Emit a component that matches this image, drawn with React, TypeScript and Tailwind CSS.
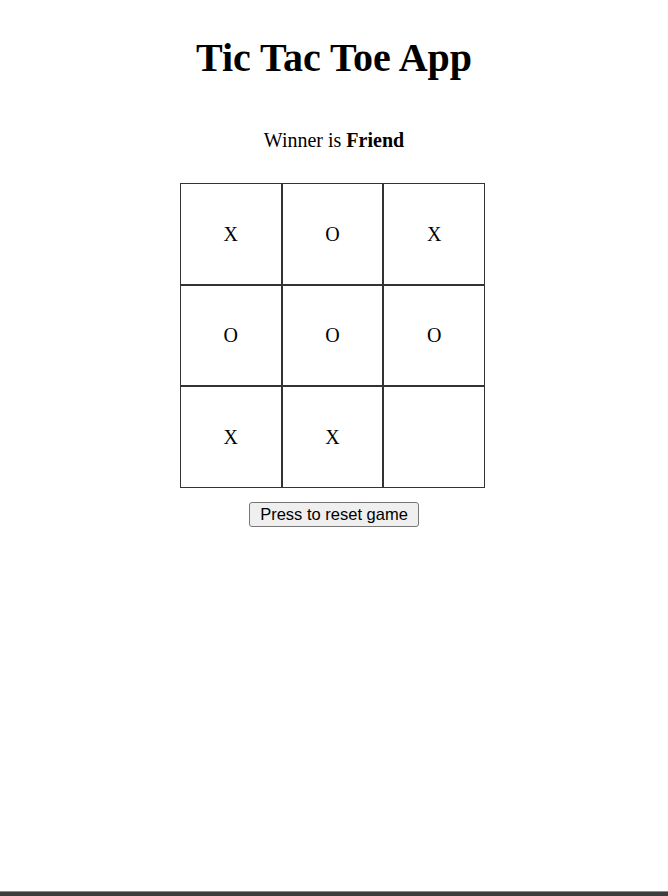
import { useState } from "react";

// ─── Constants ──────────────────────────────────────

const INITIAL_BOARD: string[] = ["X", "O", "X", "O", "O", "O", "X", "X", ""];

// ─── Component ──────────────────────────────────────

export default function App() {
  const [board, setBoard] = useState<string[]>(INITIAL_BOARD);
  const winner = "Friend";

  return (
    <div className="min-h-[896px] bg-white text-black font-['Liberation_Serif','Times_New_Roman',serif]">
      <div className="flex flex-col items-center">
        <h1 className="mt-[35px] text-[40px] font-bold leading-[46px]">
          Tic Tac Toe App
        </h1>

        <p className="mt-[48px] text-[20px] leading-[23px]">
          Winner is <b>{winner}</b>
        </p>

        {/* Board */}
        <div className="mt-[31px] mr-[3px] grid h-[305px] w-[305px] grid-cols-3 grid-rows-3">
          {board.map((cell, i) => (
            <div
              key={i}
              className="flex items-center justify-center border border-[#333] text-[20px]"
            >
              {cell}
            </div>
          ))}
        </div>

        <button
          onClick={() => setBoard(Array(9).fill(""))}
          className="mt-[14px] h-[25px] rounded-[3px] border border-[#767676] bg-[#efefef] px-[10px] text-[16.5px] leading-[19px] font-['Liberation_Sans',Arial,sans-serif]"
        >
          Press to reset game
        </button>
      </div>

      {/* window edge */}
      <div className="fixed bottom-0 left-0 h-[5px] w-full border-t border-[#8a8a8a] bg-[#3c3c3c]" />
    </div>
  );
}
